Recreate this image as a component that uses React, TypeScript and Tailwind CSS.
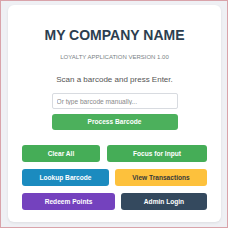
export default function App() {
  return (
    <div
      className="h-[228px] w-[228px] border border-[#d9a3aa] bg-[#eff0f4] pl-[7px] pr-[6px] pt-[4px]"
      style={{ fontFamily: '"Liberation Sans", Arial, sans-serif' }}
    >
      <div className="flex h-[217px] flex-col items-center rounded-[6px] bg-white pt-[22px] shadow-[0_1px_3px_rgba(0,0,0,0.08)]">
        <h1 className="text-[14px] font-bold leading-[16px] text-[#2c3e50]">MY COMPANY NAME</h1>
        <p className="mt-[10px] text-[6px] leading-[8px] text-[#7a7f85]">LOYALTY APPLICATION VERSION 1.00</p>
        <p className="mt-[14px] text-[8px] leading-[10px] text-[#555]">Scan a barcode and press Enter.</p>
        <input
          type="text"
          placeholder="Or type barcode manually..."
          className="mt-[8px] h-[16px] w-[126px] rounded-[2px] border border-[#d8dbe0] px-[4px] text-[6.6px] text-[#333] outline-none placeholder:text-[#888]"
        />
        <button className="mt-[5px] h-[16px] w-[126px] rounded-[3px] bg-[#4cb05c] text-[6.6px] font-bold text-white">
          Process Barcode
        </button>
        <div className="mt-[15px] flex w-[185px] flex-col gap-[7px]">
          <div className="flex gap-[7px]">
            <button className="h-[17px] w-[78px] rounded-[3px] bg-[#45ad57] text-[6.6px] font-bold text-white">Clear All</button>
            <button className="h-[17px] flex-1 rounded-[3px] bg-[#45ad57] text-[6.6px] font-bold text-white">Focus for Input</button>
          </div>
          <div className="flex gap-[6px]">
            <button className="h-[17px] w-[87px] rounded-[3px] bg-[#1b8bbf] text-[6.6px] font-bold text-white">Lookup Barcode</button>
            <button className="h-[17px] flex-1 rounded-[3px] bg-[#fdc13c] text-[6.6px] font-bold text-[#3a3a3a]">View Transactions</button>
          </div>
          <div className="flex gap-[6px]">
            <button className="h-[17px] w-[93px] rounded-[3px] bg-[#7442be] text-[6.6px] font-bold text-white">Redeem Points</button>
            <button className="h-[17px] flex-1 rounded-[3px] bg-[#34495e] text-[6.6px] font-bold text-white">Admin Login</button>
          </div>
        </div>
      </div>
    </div>
  );
}
